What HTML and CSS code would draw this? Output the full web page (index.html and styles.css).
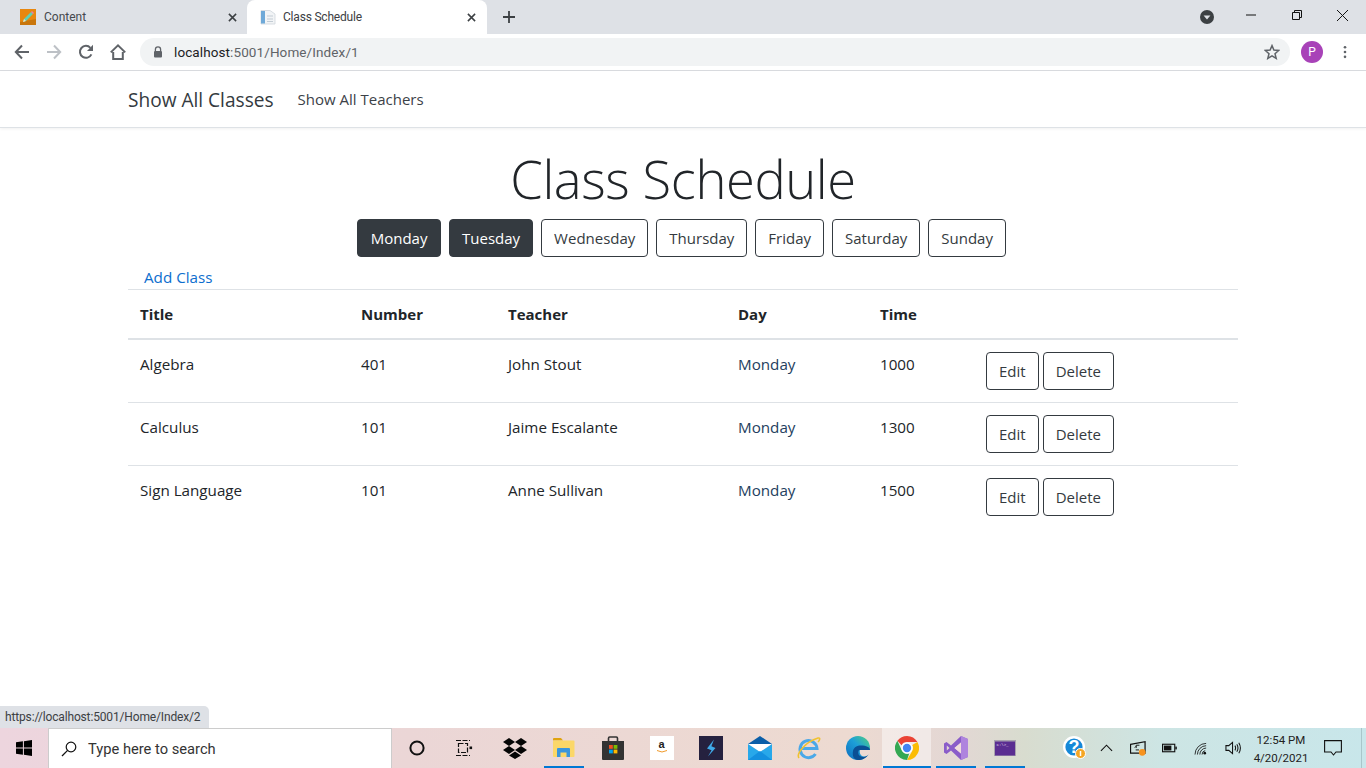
FILE: index.html
```html
<!DOCTYPE html>
<html lang="en">
<head>
  <meta charset="UTF-8" />
  <meta name="viewport" content="width=device-width, initial-scale=1.0"/>
  <title>Class Schedule</title>
  <link rel="stylesheet" href="styles.css">
</head>
<body>

<!-- BROWSER CHROME -->
<header class="browser">
  <div class="tabstrip">
    <div class="tab">
      <svg class="favicon" viewBox="0 0 16 16">
        <rect width="16" height="16" fill="#e8870e"/>
        <path d="M0 13 L16 10 V16 H0Z" fill="#c9760c"/>
        <path d="M3 13 L4 10 L11 3 L13 5 L6 12Z" fill="#5fd0b4"/>
        <path d="M11 3 L12 2 L14 4 L13 5Z" fill="#e77fb0"/>
        <path d="M3 13 L4 10 L6 12Z" fill="#f6e3c0"/>
      </svg>
      <span class="tab-title">Content</span>
      <svg class="tab-close" viewBox="0 0 10 10"><path d="M1 1 L9 9 M9 1 L1 9" stroke="#3c4043" stroke-width="1.7"/></svg>
    </div>
    <div class="tab tab-active">
      <svg class="favicon" viewBox="0 0 16 16">
        <path d="M1 1.5 H10 L15 5 V15 H1Z" fill="#f2f4f6" stroke="#cfd6dc" stroke-width=".8"/>
        <rect x="1" y="2" width="4" height="12.5" fill="#6fa9d8"/>
        <path d="M7 7 H13 M7 10 H13 M7 12.5 H13" stroke="#c3ccd4"/>
      </svg>
      <span class="tab-title">Class Schedule</span>
      <svg class="tab-close" viewBox="0 0 10 10"><path d="M1 1 L9 9 M9 1 L1 9" stroke="#3c4043" stroke-width="1.7"/></svg>
    </div>
    <svg class="new-tab" viewBox="0 0 12 12"><path d="M6 0 V12 M0 6 H12" stroke="#3c4043" stroke-width="1.8"/></svg>
    <div class="window-controls">
      <svg class="profile-menu" viewBox="0 0 14 14">
        <circle cx="7" cy="7" r="7" fill="#3c4043"/>
        <path d="M3.6 5.4 H10.4 L7 9.6Z" fill="#dee1e6"/>
      </svg>
      <svg class="win-btn win-min" viewBox="0 0 10 10"><path d="M0 5 H10" stroke="#111" stroke-width="1"/></svg>
      <svg class="win-btn win-max" viewBox="0 0 10 10"><path d="M.5 2.5 H7.5 V9.5 H.5Z M2.5 2.5 V.5 H9.5 V7.5 H7.5" fill="none" stroke="#111"/></svg>
      <svg class="win-btn win-close" viewBox="0 0 10 10"><path d="M0 0 L10 10 M10 0 L0 10" stroke="#111" stroke-width=".9"/></svg>
    </div>
  </div>
  <div class="toolbar">
    <svg class="tool-icon" viewBox="0 0 16 16"><path d="M15 8 H2 M8 1.5 L1.8 8 L8 14.5" fill="none" stroke="#5f6368" stroke-width="2"/></svg>
    <svg class="tool-icon" viewBox="0 0 16 16"><path d="M1 8 H14 M8 1.5 L14.2 8 L8 14.5" fill="none" stroke="#bdc1c6" stroke-width="2"/></svg>
    <svg class="tool-icon" viewBox="0 0 16 16"><path d="M13.4 10.4 A6 6 0 1 1 12.4 3.8" fill="none" stroke="#5f6368" stroke-width="2"/><path d="M15 .8 V7 H9Z" fill="#5f6368"/></svg>
    <svg class="tool-icon" viewBox="0 0 16 16"><path d="M3.2 8 V15 H12.8 V8 M.8 8.4 L8 1.4 L15.2 8.4" fill="none" stroke="#5f6368" stroke-width="2"/></svg>
    <div class="omnibox">
      <svg class="lock" viewBox="0 0 10 12"><path d="M2.4 5 V3.4 A2.6 2.6 0 0 1 7.6 3.4 V5" fill="none" stroke="#5f6368" stroke-width="1.3"/><rect x="1" y="5" width="8" height="6.4" rx="1" fill="#5f6368"/></svg>
      <span class="url"><span class="url-host">localhost</span>:5001/Home/Index/1</span>
      <svg class="star" viewBox="0 0 16 16"><path d="M8 1.6 L9.9 6.1 L14.7 6.5 L11 9.7 L12.2 14.4 L8 11.9 L3.8 14.4 L5 9.7 L1.3 6.5 L6.1 6.1Z" fill="none" stroke="#5f6368" stroke-width="1.5"/></svg>
    </div>
    <div class="avatar">P</div>
    <svg class="kebab" viewBox="0 0 4 16"><circle cx="2" cy="2.5" r="1.5" fill="#5f6368"/><circle cx="2" cy="8" r="1.5" fill="#5f6368"/><circle cx="2" cy="13.5" r="1.5" fill="#5f6368"/></svg>
  </div>
</header>

<!-- PAGE -->
<div class="page">
  <nav class="navbar">
    <a href="#" class="navbar-brand">Show All Classes</a>
    <a href="#" class="nav-link">Show All Teachers</a>
  </nav>

  <main class="container">
    <h1>Class Schedule</h1>
    <div class="day-buttons">
      <a href="#" class="btn btn-dark">Monday</a>
      <a href="#" class="btn btn-dark">Tuesday</a>
      <a href="#" class="btn">Wednesday</a>
      <a href="#" class="btn">Thursday</a>
      <a href="#" class="btn">Friday</a>
      <a href="#" class="btn">Saturday</a>
      <a href="#" class="btn">Sunday</a>
    </div>
    <a href="#" class="add-link">Add Class</a>
    <table class="table">
      <colgroup>
        <col class="col-title"><col class="col-number"><col class="col-teacher"><col class="col-day"><col class="col-time"><col>
      </colgroup>
      <thead>
        <tr><th>Title</th><th>Number</th><th>Teacher</th><th>Day</th><th>Time</th><th></th></tr>
      </thead>
      <tbody>
        <tr>
          <td>Algebra</td><td>401</td><td>John Stout</td><td class="day">Monday</td><td>1000</td>
          <td class="actions"><a href="#" class="btn">Edit</a><a href="#" class="btn">Delete</a></td>
        </tr>
        <tr>
          <td>Calculus</td><td>101</td><td>Jaime Escalante</td><td class="day">Monday</td><td>1300</td>
          <td class="actions"><a href="#" class="btn">Edit</a><a href="#" class="btn">Delete</a></td>
        </tr>
        <tr>
          <td>Sign Language</td><td>101</td><td>Anne Sullivan</td><td class="day">Monday</td><td>1500</td>
          <td class="actions"><a href="#" class="btn">Edit</a><a href="#" class="btn">Delete</a></td>
        </tr>
      </tbody>
    </table>
  </main>

  <div class="status-bubble">https://localhost:5001/Home/Index/2</div>
</div>

<!-- TASKBAR -->
<footer class="taskbar">
  <div class="start">
    <svg viewBox="0 0 16 16" class="start-logo"><path d="M0 2.3 L6.9 1.3 V7.5 H0Z M7.9 1.2 L16 0 V7.5 H7.9Z M0 8.5 H6.9 V14.7 L0 13.7Z M7.9 8.5 H16 V16 L7.9 14.8Z" fill="#000"/></svg>
  </div>
  <div class="search">
    <svg viewBox="0 0 16 16" class="search-icon"><circle cx="10" cy="6" r="4.8" fill="none" stroke="#111" stroke-width="1.2"/><path d="M6.6 9.4 L1 15" stroke="#111" stroke-width="1.3"/></svg>
    <span>Type here to search</span>
  </div>
  <div class="task-icons">
    <div class="task">
      <svg viewBox="0 0 18 18" class="i18"><circle cx="9" cy="9" r="6.6" fill="none" stroke="#111" stroke-width="2"/></svg>
    </div>
    <div class="task task-view">
      <svg viewBox="0 0 18 18" class="i18"><path d="M3.5 4.5 H12.5 V13.5 H3.5Z M1 1.5 H15 M1 16.5 H15" fill="none" stroke="#111" stroke-width="1.2" stroke-dasharray="5 1.5"/><rect x="14.5" y="7.5" width="2.6" height="2.6" fill="#111"/></svg>
    </div>
    <div class="task">
      <svg viewBox="0 0 24 22" class="i24"><path d="M6 1 L12 5 L6 9 L0 5Z M18 1 L24 5 L18 9 L12 5Z M6 9 L12 13 L6 17 L0 13Z M18 9 L24 13 L18 17 L12 13Z M12 14.5 L18 18.5 L12 22 L6 18.5Z" fill="#050505"/></svg>
    </div>
    <div class="task task-open">
      <svg viewBox="0 0 22 20" class="i22">
        <path d="M0 1 Q0 0 1 0 H8 L10 2.5 H0Z" fill="#dfa30f"/>
        <rect y="2.5" width="21.5" height="16.5" rx="1" fill="#fbd768"/>
        <path d="M4 19 V11 Q4 10 5 10 H16 Q17 10 17 11 V19 H13.5 V14.5 H7.5 V19Z" fill="#3a96dd"/>
      </svg>
    </div>
    <div class="task">
      <svg viewBox="0 0 24 24" class="i24">
        <path d="M7.5 6 V2.2 Q7.5 1 8.7 1 H15.3 Q16.5 1 16.5 2.2 V6" fill="none" stroke="#333" stroke-width="1.6"/>
        <path d="M1 5 H23 V23 Q23 24 22 24 H2 Q1 24 1 23Z" fill="#333"/>
        <rect x="8" y="9" width="3.8" height="3.8" fill="#f25022"/><rect x="12.6" y="9" width="3.8" height="3.8" fill="#7fba00"/>
        <rect x="8" y="13.6" width="3.8" height="3.8" fill="#00a4ef"/><rect x="12.6" y="13.6" width="3.8" height="3.8" fill="#ffb900"/>
      </svg>
    </div>
    <div class="task">
      <div class="amazon">a<svg viewBox="0 0 10 3"><path d="M0 .5 Q5 3.5 10 .5" fill="none" stroke="#f09a2b" stroke-width="1"/></svg></div>
    </div>
    <div class="task">
      <svg viewBox="0 0 24 24" class="i24"><rect width="24" height="24" fill="#25213f"/><path d="M15 3.5 L8 12.5 L12.5 14.2 L9 20.5 L16.5 12 L12.4 10.3Z" fill="#3fa9e8"/></svg>
    </div>
    <div class="task">
      <svg viewBox="0 0 24 24" class="i24">
        <path d="M0 8 L12 0 L24 8Z" fill="#0a5ea8"/>
        <path d="M0 8 H24 L12 16Z" fill="#fff"/>
        <path d="M0 8 L12 16 L24 8 V24 H0Z" fill="#28a8ea"/>
        <path d="M0 24 L12 15 L24 24Z" fill="#1490df"/>
      </svg>
    </div>
    <div class="task">
      <svg viewBox="0 0 24 24" class="i24">
        <path d="M3.5 12.5 H20 A8.5 8.5 0 1 0 18.5 18" fill="none" stroke="#4aa8e8" stroke-width="3"/>
        <path d="M2 22 C-1 18 8 6 21 2 C23.5 1.5 23 4 21 6" fill="none" stroke="#f0c230" stroke-width="1.6"/>
      </svg>
    </div>
    <div class="task">
      <svg viewBox="0 0 24 24" class="i24">
        <defs>
          <linearGradient id="edge-a" x1="0" y1="1" x2="1" y2="0"><stop offset="0" stop-color="#0f6cbd"/><stop offset=".55" stop-color="#1d9fd8"/><stop offset="1" stop-color="#52d17c"/></linearGradient>
        </defs>
        <circle cx="12" cy="12" r="12" fill="url(#edge-a)"/>
        <path d="M24 14 H13 C11 17 13 21 17 21 C19 21 21 20 22.5 18.5 C20.5 22 16.5 24 12 24 C8 24 6 20 7 15 C8 11 11 9.5 15 9.5 C20 9.5 24 11 24 14Z" fill="#0b4f94"/>
        <path d="M24 14 H14 C13 17 15 20.5 18 20.5 C20 20.5 22 19.5 24 17Z" fill="#eddad2"/>
      </svg>
    </div>
    <div class="task task-open task-active">
      <svg viewBox="0 0 24 24" class="i24">
        <path d="M12 0 A12 12 0 0 1 22.4 6 H12 A6 6 0 0 0 6.6 9.2 L2.4 4.8 A12 12 0 0 1 12 0Z" fill="#ea4335"/>
        <path d="M22.4 6 A12 12 0 0 1 12 24 L17.2 15 A6 6 0 0 0 17.2 9 L22.4 6Z" fill="#fbbc05"/>
        <path d="M2.4 4.8 L6.8 14.6 A6 6 0 0 0 14.2 17.6 L12 24 A12 12 0 0 1 2.4 4.8Z" fill="#34a853"/>
        <circle cx="12" cy="12" r="5.6" fill="#fff"/><circle cx="12" cy="12" r="4.2" fill="#4285f4"/>
      </svg>
    </div>
    <div class="task task-open">
      <svg viewBox="0 0 24 24" class="i24">
        <path d="M17 0 L24 3 V21 L17 24 L7 14.5 L2.5 18 L0 16.5 V7.5 L2.5 6 L7 9.5Z M17 6.5 L10.5 12 L17 17.5Z M2.8 9.5 V14.5 L5.5 12Z" fill="#8a5cc9" fill-rule="evenodd"/>
        <path d="M17 0 L24 3 V21 L17 24Z" fill="#b388e0" fill-opacity=".9"/>
        <path d="M17 6.5 V17.5 L10.5 12Z" fill="#f0dcdc"/>
      </svg>
    </div>
    <div class="task task-open">
      <svg viewBox="0 0 22 16" class="term"><rect width="22" height="16" fill="#a8a2ae"/><rect x="1" y="1.5" width="20" height="14" fill="#5a2d91"/><text x="2.5" y="6" class="term-text">C:\&gt;_</text></svg>
    </div>
  </div>

  <div class="tray">
    <div class="tray-item">
      <svg viewBox="0 0 24 24" class="i24">
        <circle cx="11" cy="11" r="11" fill="#fff"/><circle cx="11" cy="11" r="8.6" fill="#1588d8"/>
        <text x="11" y="17" class="help-mark">?</text>
        <circle cx="17.5" cy="17.5" r="5" fill="#f5a623" stroke="#fff" stroke-width="1"/>
        <path d="M17.5 15 V20" stroke="#fff" stroke-width="1.5"/>
      </svg>
    </div>
    <div class="tray-item">
      <svg viewBox="0 0 14 8" class="chevron"><path d="M1 7 L7 1 L13 7" fill="none" stroke="#111" stroke-width="1.2"/></svg>
    </div>
    <div class="tray-item">
      <svg viewBox="0 0 18 16" class="i18w">
        <path d="M.5 3.5 L16 .8 V13 H.5Z" fill="none" stroke="#111" stroke-width="1.3"/>
        <path d="M10 4.5 H6.5 V7.5 M6.5 5.5 L5 7 M6 9.5 H9.5" fill="none" stroke="#111" stroke-width="1"/>
        <circle cx="13" cy="12" r="3.6" fill="#f7931e"/>
      </svg>
    </div>
    <div class="tray-item">
      <svg viewBox="0 0 16 10" class="battery"><rect x=".6" y="1" width="13" height="8" fill="none" stroke="#111" stroke-width="1.2"/><rect x="2" y="2.4" width="8" height="5.2" fill="#111"/><rect x="14.2" y="3.5" width="1.6" height="3" fill="#111"/></svg>
    </div>
    <div class="tray-item">
      <svg viewBox="0 0 16 14" class="wifi">
        <path d="M1 13.5 A12 12 0 0 1 13 1.5 M3.6 13.5 A9.5 9.5 0 0 1 13 4 M6.2 13.5 A7 7 0 0 1 13 6.5 M8.6 13.5 A4.5 4.5 0 0 1 12 9.2" fill="none" stroke="#111" stroke-width=".9"/>
        <circle cx="11.5" cy="12" r="1.4" fill="#111"/>
      </svg>
    </div>
    <div class="tray-item">
      <svg viewBox="0 0 18 14" class="speaker">
        <path d="M1 4.5 H4 L8 1 V13 L4 9.5 H1Z" fill="none" stroke="#111" stroke-width="1.1"/>
        <path d="M10.5 4.5 Q12 7 10.5 9.5 M12.5 3 Q15 7 12.5 11 M14.6 1.4 Q18 7 14.6 12.6" fill="none" stroke="#111" stroke-width="1.1"/>
      </svg>
    </div>
  </div>
  <div class="clock"><span>12:54 PM</span><span>4/20/2021</span></div>
  <div class="notify">
    <svg viewBox="0 0 18 16" class="notify-icon"><path d="M.6 .6 H17.4 V12 H12 L9.5 15 L7 12 H.6Z" fill="none" stroke="#111" stroke-width="1.1"/></svg>
  </div>
  <div class="show-desktop"></div>
</footer>

</body>
</html>
```

FILE: styles.css
```css
* {
  box-sizing: border-box;
}

html, body {
  height: 100%;
}

body {
  margin: 0;
  display: flex;
  flex-direction: column;
  height: 768px;
  overflow: hidden;
  font-family: 'Open Sans', 'Noto Sans', sans-serif;
  font-size: 15.2px;
  line-height: 24px;
  color: #212529;
  background: #fff;
}

a {
  text-decoration: none;
  color: inherit;
}

svg {
  display: block;
  flex: none;
}

/* Browser chrome */
.browser {
  flex: none;
  height: 71px;
  font-family: 'Roboto', sans-serif;
  border-bottom: 1px solid #dadce0;
}

.tabstrip {
  display: flex;
  align-items: center;
  height: 34px;
  background: #dee1e6;
}

.tab {
  display: flex;
  align-items: center;
  width: 247px;
  height: 34px;
  padding: 0 10px 0 20px;
  font-size: 12px;
  color: #45484c;
}

.tab-active {
  width: 240px;
  padding: 0 11px 0 13px;
  background: #fff;
  border-radius: 8px 8px 0 0;
  color: #3c4043;
}

.favicon {
  width: 16px;
  height: 16px;
  margin-right: 8px;
}

.tab-active .favicon {
  margin-right: 7px;
}

.tab-title {
  flex: 1;
}

.tab-active .tab-title {
  letter-spacing: -0.2px;
}

.tab-close {
  width: 9px;
  height: 9px;
}

.new-tab {
  width: 12px;
  height: 12px;
  margin-left: 16px;
}

.window-controls {
  display: flex;
  align-items: center;
  margin-left: auto;
}

.profile-menu {
  width: 14px;
  height: 14px;
  margin-right: 32px;
}

.win-btn {
  width: 10px;
  height: 10px;
  margin-top: -4px;
}

.win-min {
  margin-right: 36px;
}

.win-max {
  margin-right: 35px;
}

.win-close {
  width: 11px;
  height: 11px;
  margin-right: 18px;
}

.toolbar {
  display: flex;
  align-items: center;
  height: 36px;
  padding: 0 0 0 14px;
}

.tool-icon {
  width: 16px;
  height: 16px;
  margin-right: 16px;
}

.omnibox {
  display: flex;
  align-items: center;
  width: 1150px;
  height: 28px;
  margin-left: -2px;
  padding: 0 10px 0 13px;
  border-radius: 14px;
  background: #f1f3f4;
  font-size: 13.5px;
  color: #5f6368;
}

.lock {
  width: 10px;
  height: 12px;
  margin-right: 11px;
}

.url {
  flex: 1;
  letter-spacing: 0.1px;
}

.url-host {
  color: #202124;
}

.star {
  width: 16px;
  height: 16px;
}

.avatar {
  width: 22px;
  height: 22px;
  margin-left: 11px;
  border-radius: 50%;
  background: #a842b8;
  color: #fff;
  font-size: 12px;
  line-height: 22px;
  text-align: center;
}

.kebab {
  width: 4px;
  height: 14px;
  margin-left: 20px;
}

/* Page */
.page {
  position: relative;
  flex: 1;
  min-height: 0;
}

.navbar {
  display: flex;
  align-items: center;
  height: 57px;
  padding: 0 128px;
  border-bottom: 1px solid #dee2e6;
  box-shadow: 0 1px 3px rgba(0, 0, 0, 0.06);
}

.navbar-brand {
  margin-right: 24px;
  padding-top: 2px;
  font-size: 19.1px;
  color: #343a40;
}

.nav-link {
  font-size: 15px;
  color: #3c4248;
}

.container {
  width: 1110px;
  margin: 0 auto;
}

h1 {
  margin: 17px 0 7px;
  font-size: 52.5px;
  font-weight: 300;
  line-height: 67px;
  letter-spacing: -0.4px;
  text-align: center;
}

.day-buttons {
  display: flex;
  justify-content: center;
  gap: 8px;
  padding-right: 3px;
}

.btn {
  display: inline-block;
  height: 38px;
  padding: 6px 12px;
  border: 1px solid #343a40;
  border-radius: 4px;
  font-size: 15px;
  color: #343a40;
}

.btn-dark {
  min-width: 84px;
  background: #343a40;
  color: #fff;
  text-align: center;
}

.add-link {
  display: block;
  margin-top: 8px;
  padding-left: 16px;
  color: #0d6ece;
}

.table {
  width: 100%;
  table-layout: fixed;
  border-collapse: collapse;
}

.col-title {
  width: 221px;
}

.col-number {
  width: 147px;
}

.col-teacher {
  width: 230px;
}

.col-day {
  width: 142px;
}

.col-time {
  width: 106px;
}

th, td {
  padding: 12px;
  text-align: left;
  vertical-align: top;
  border-top: 1px solid #dee2e6;
}

th {
  font-size: 15px;
  font-weight: 700;
  border-bottom: 2px solid #dee2e6;
}

thead + tbody tr:first-child td {
  border-top: 0;
}

.day {
  color: #24405e;
}

.actions {
  display: flex;
  gap: 4px;
}

.status-bubble {
  position: absolute;
  left: 0;
  bottom: 0;
  width: 209px;
  height: 22px;
  padding-left: 5px;
  background: #dee1e6;
  border-top-right-radius: 5px;
  font-family: 'Roboto', sans-serif;
  font-size: 12px;
  line-height: 22px;
  letter-spacing: -0.15px;
  color: #3c4043;
}

/* Windows taskbar */
.taskbar {
  display: flex;
  align-items: center;
  flex: none;
  height: 40px;
  background: linear-gradient(to right, #edd5de 0, #ebd6d6 30%, #eddad1 62%, #e3d7d4 70%, #d8dccf 75%, #cde5e4 85%, #c8e6ea 100%);
  font-family: 'Roboto', sans-serif;
  color: #111;
}

.start {
  display: flex;
  align-items: center;
  justify-content: center;
  width: 48px;
  height: 40px;
}

.start-logo {
  width: 16px;
  height: 16px;
}

.search {
  display: flex;
  align-items: center;
  width: 344px;
  height: 40px;
  padding: 1px 0 0 12px;
  background: #fff;
  border: 1px solid #ccc;
  border-bottom: 0;
  font-size: 14.7px;
  color: #333;
}

.search-icon {
  width: 16px;
  height: 16px;
  margin-right: 11px;
}

.task-icons {
  display: flex;
}

.task {
  display: flex;
  align-items: center;
  justify-content: center;
  width: 49px;
  height: 40px;
}

.task-open {
  position: relative;
}

.task-open::after {
  content: '';
  position: absolute;
  left: 5px;
  right: 4px;
  bottom: 0;
  height: 2px;
  background: #0078d4;
}

.task-active {
  background: rgba(255, 255, 255, 0.45);
}

.task-active::after {
  left: 1px;
  right: 0;
}

.task-view {
  padding-right: 4px;
}

.i18 {
  width: 18px;
  height: 18px;
}

.i22 {
  width: 22px;
  height: 20px;
}

.i24 {
  width: 24px;
  height: 24px;
}

.amazon {
  display: flex;
  flex-direction: column;
  align-items: center;
  width: 24px;
  height: 24px;
  padding-top: 3px;
  background: #fff;
  font-family: 'Liberation Sans', sans-serif;
  font-size: 11px;
  font-weight: 700;
  line-height: 11px;
  color: #222;
}

.amazon svg {
  width: 10px;
  height: 3px;
}

.term {
  width: 22px;
  height: 16px;
}

.term-text {
  font-family: 'Liberation Mono', monospace;
  font-size: 4px;
  fill: #e4dcec;
}

.help-mark {
  font-family: 'Liberation Sans', sans-serif;
  font-size: 18px;
  font-weight: 700;
  fill: #fff;
  text-anchor: middle;
}

.tray {
  display: flex;
  width: 190px;
  margin-left: 30px;
}

.tray-item {
  display: flex;
  flex: 1;
  align-items: center;
  justify-content: center;
  height: 40px;
}

.chevron {
  width: 13px;
  height: 8px;
}

.i18w {
  width: 17px;
  height: 15px;
}

.battery {
  width: 15px;
  height: 10px;
}

.wifi {
  width: 15px;
  height: 13px;
}

.speaker {
  width: 17px;
  height: 14px;
}

.clock {
  display: flex;
  flex-direction: column;
  align-items: center;
  width: 64px;
  padding-top: 1px;
  font-size: 11.5px;
  line-height: 18px;
  color: #222;
}

.notify {
  display: flex;
  align-items: center;
  width: 32px;
}

.notify-icon {
  width: 18px;
  height: 16px;
  margin-left: 11px;
}

.show-desktop {
  width: 5px;
  height: 40px;
  margin-left: auto;
  border-left: 1px solid #a9c6ca;
}
```
